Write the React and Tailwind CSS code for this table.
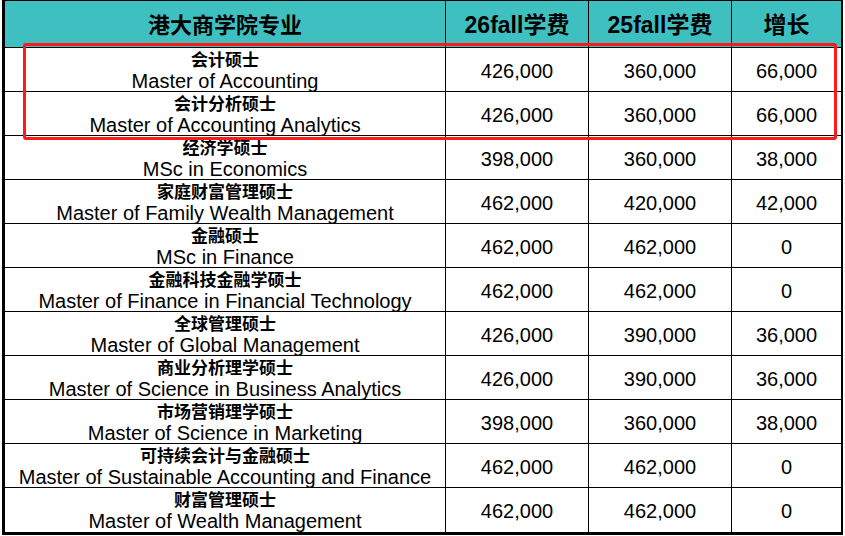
import React from 'react'

const rows = [
  ["会计硕士", "Master of Accounting", "426,000", "360,000", "66,000"],
  ["会计分析硕士", "Master of Accounting Analytics", "426,000", "360,000", "66,000"],
  ["经济学硕士", "MSc in Economics", "398,000", "360,000", "38,000"],
  ["家庭财富管理硕士", "Master of Family Wealth Management", "462,000", "420,000", "42,000"],
  ["金融硕士", "MSc in Finance", "462,000", "462,000", "0"],
  ["金融科技金融学硕士", "Master of Finance in Financial Technology", "462,000", "462,000", "0"],
  ["全球管理硕士", "Master of Global Management", "426,000", "390,000", "36,000"],
  ["商业分析理学硕士", "Master of Science in Business Analytics", "426,000", "390,000", "36,000"],
  ["市场营销理学硕士", "Master of Science in Marketing", "398,000", "360,000", "38,000"],
  ["可持续会计与金融硕士", "Master of Sustainable Accounting and Finance", "462,000", "462,000", "0"],
  ["财富管理硕士", "Master of Wealth Management", "462,000", "462,000", "0"],
]

const font = { fontFamily: '"Liberation Sans", "Noto Sans CJK SC", sans-serif' }

const App = () => {
  return (
    <div className="relative w-[845px] h-[536px] bg-white overflow-hidden" style={font}>
      <div className="ml-[2px] w-[841px] border-t border-l-[3px] border-r-[2px] border-b-[3px] border-black text-black">
        {/* header */}
        <div className="grid grid-cols-[440px_143px_143px_1fr] h-[47px] bg-[#3ebfc0] border-b border-black">
          <div className="flex items-center justify-center pt-[2px] text-[22px] font-bold">港大商学院专业</div>
          <div className="flex items-center justify-center pt-[2px] text-[23px] font-bold border-l border-black">26fall学费</div>
          <div className="flex items-center justify-center pt-[2px] text-[23px] font-bold border-l border-black">25fall学费</div>
          <div className="flex items-center justify-center pt-[2px] text-[23px] font-bold border-l border-black">增长</div>
        </div>
        {rows.map((r, i) => (
          <div
            key={i}
            className={"grid grid-cols-[440px_143px_143px_1fr] h-[44px] " + (i < rows.length - 1 ? "border-b border-black" : "")}
          >
            <div className="flex flex-col items-center justify-start pt-[4px]">
              <span className="text-[17px] leading-[18px] font-bold">{r[0]}</span>
              <span className="text-[20px] leading-[22px]">{r[1]}</span>
            </div>
            <div className="flex items-center justify-center pt-[2px] text-[20px] border-l border-black">{r[2]}</div>
            <div className="flex items-center justify-center pt-[2px] text-[20px] border-l border-black">{r[3]}</div>
            <div className="flex items-center justify-center pt-[2px] text-[20px] border-l border-black">{r[4]}</div>
          </div>
        ))}
      </div>
      {/* highlight box */}
      <div className="absolute left-[23px] top-[43px] w-[814px] h-[97px] border-[3px] border-[#ff1a1a] rounded-[3px]"></div>
    </div>
  )
}

export default App
